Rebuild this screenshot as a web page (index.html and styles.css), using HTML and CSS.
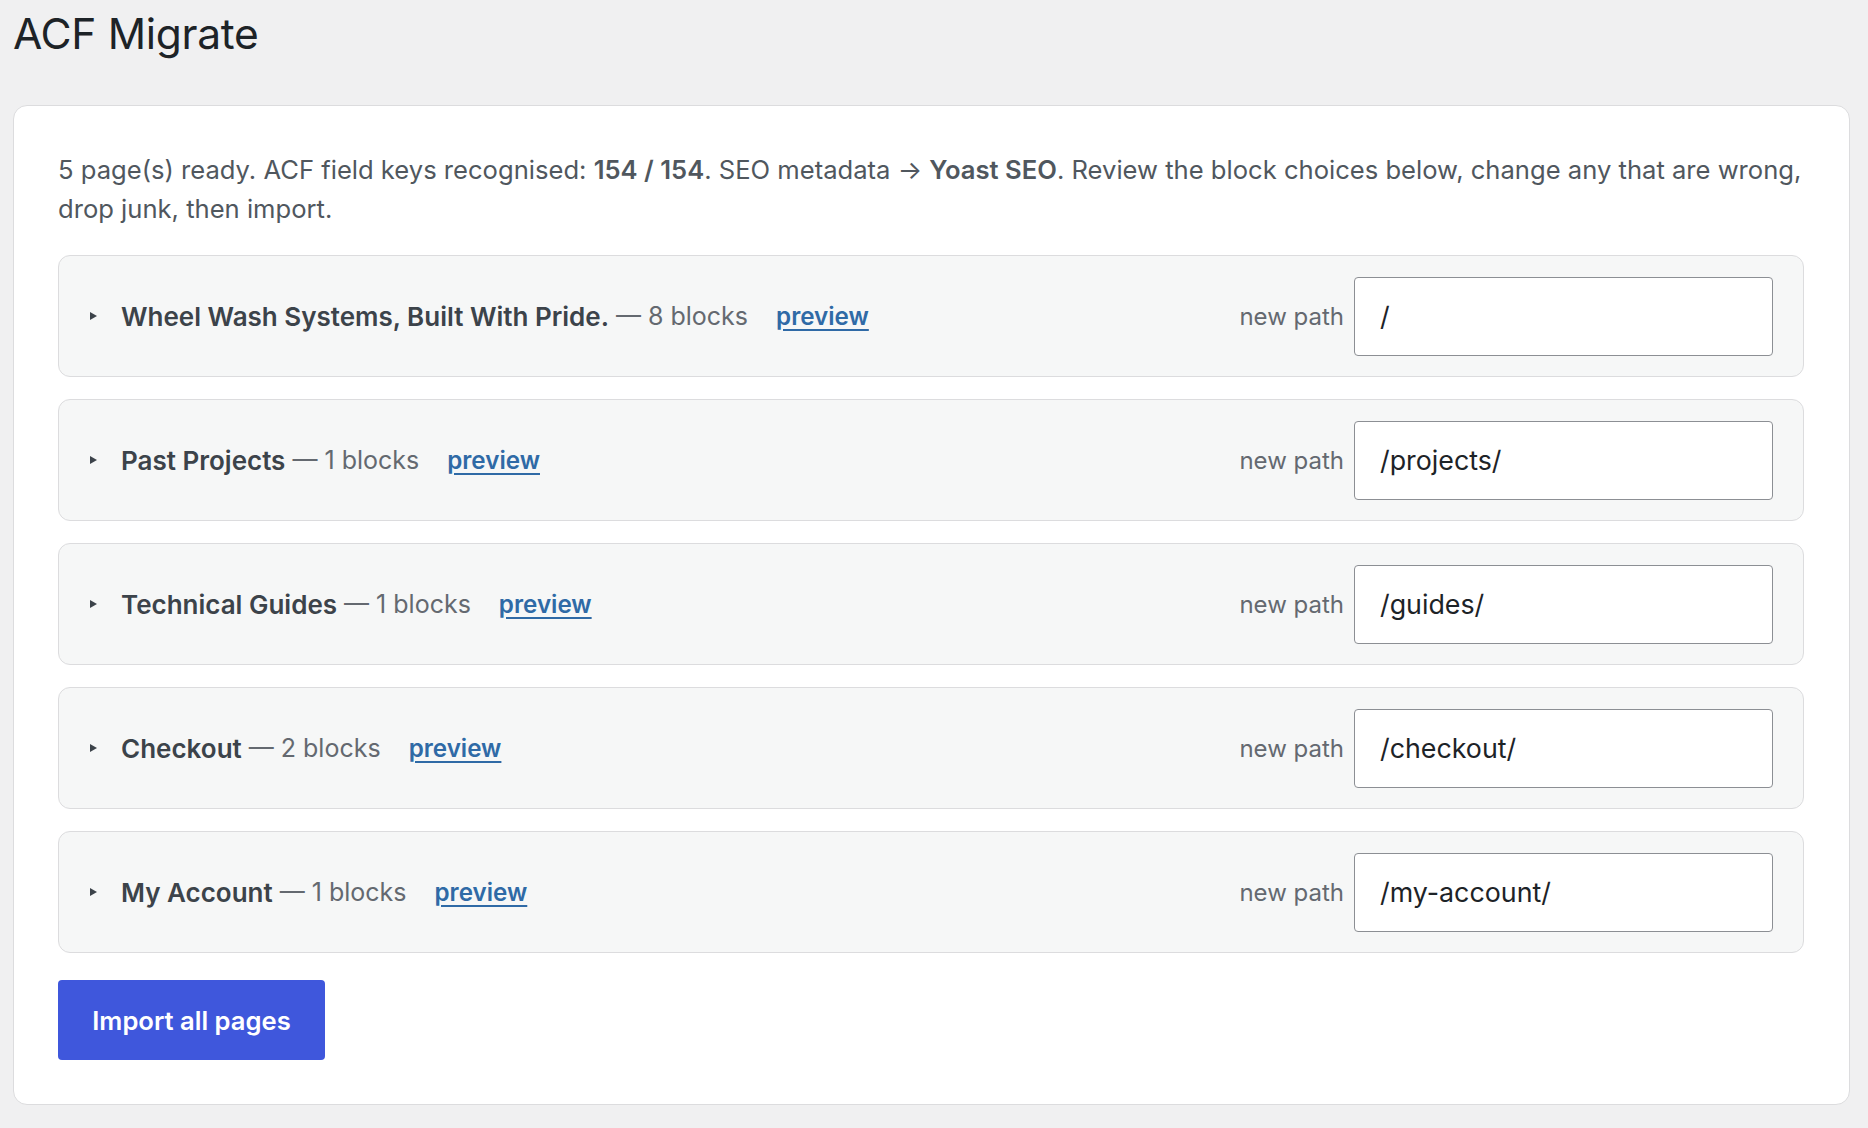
FILE: index.html
```html
<!DOCTYPE html>
<html lang="en">
<head>
<meta charset="utf-8">
<title>ACF Migrate</title>
<link rel="stylesheet" href="styles.css">
</head>
<body>
<div class="wrap">
  <h1 class="page-title">ACF Migrate</h1>
  <div class="card">
    <p class="summary-text">5 page(s) ready. ACF field keys recognised: <strong>154 / 154</strong>. SEO metadata → <strong>Yoast SEO</strong>. Review the block choices below, change any that are wrong, drop junk, then import.</p>
    <div class="pages">
      <div class="page-row">
        <div class="row-left">
          <svg class="caret" width="7" height="8" viewBox="0 0 7 8"><path d="M0 0 L7 4 L0 8 Z" fill="#3c434a"/></svg>
          <span class="page-name">Wheel Wash Systems, Built With Pride.</span>
          <span class="page-count">— 8 blocks</span>
          <a class="preview" href="#">preview</a>
        </div>
        <label class="row-right"><span class="path-label">new path</span><input class="path-input" type="text" value="/"></label>
      </div>
      <div class="page-row">
        <div class="row-left">
          <svg class="caret" width="7" height="8" viewBox="0 0 7 8"><path d="M0 0 L7 4 L0 8 Z" fill="#3c434a"/></svg>
          <span class="page-name">Past Projects</span>
          <span class="page-count">— 1 blocks</span>
          <a class="preview" href="#">preview</a>
        </div>
        <label class="row-right"><span class="path-label">new path</span><input class="path-input" type="text" value="/projects/"></label>
      </div>
      <div class="page-row">
        <div class="row-left">
          <svg class="caret" width="7" height="8" viewBox="0 0 7 8"><path d="M0 0 L7 4 L0 8 Z" fill="#3c434a"/></svg>
          <span class="page-name">Technical Guides</span>
          <span class="page-count">— 1 blocks</span>
          <a class="preview" href="#">preview</a>
        </div>
        <label class="row-right"><span class="path-label">new path</span><input class="path-input" type="text" value="/guides/"></label>
      </div>
      <div class="page-row">
        <div class="row-left">
          <svg class="caret" width="7" height="8" viewBox="0 0 7 8"><path d="M0 0 L7 4 L0 8 Z" fill="#3c434a"/></svg>
          <span class="page-name">Checkout</span>
          <span class="page-count">— 2 blocks</span>
          <a class="preview" href="#">preview</a>
        </div>
        <label class="row-right"><span class="path-label">new path</span><input class="path-input" type="text" value="/checkout/"></label>
      </div>
      <div class="page-row">
        <div class="row-left">
          <svg class="caret" width="7" height="8" viewBox="0 0 7 8"><path d="M0 0 L7 4 L0 8 Z" fill="#3c434a"/></svg>
          <span class="page-name">My Account</span>
          <span class="page-count">— 1 blocks</span>
          <a class="preview" href="#">preview</a>
        </div>
        <label class="row-right"><span class="path-label">new path</span><input class="path-input" type="text" value="/my-account/"></label>
      </div>
    </div>
    <button class="import-btn" type="button">Import all pages</button>
  </div>
</div>
</body>
</html>
```
FILE: styles.css
```css
* { box-sizing: border-box; }
html, body { margin: 0; padding: 0; }
body {
  background: #f0f0f1;
  font-family: Inter, "Noto Sans", "Liberation Sans", sans-serif;
  color: #1d2327;
}
.wrap {
  padding: 6px 18px 24px 13px;
}
.page-title {
  margin: 0 0 43px 0;
  font-size: 42.5px;
  line-height: 56px;
  font-weight: 400;
  color: #1d2327;
  letter-spacing: -0.3px;
}
.card {
  background: #fff;
  border: 1px solid #dcdcde;
  border-radius: 14px;
  padding: 44px 45px 44px 44px;
}
.summary-text {
  margin: 0 0 27px 0;
  font-size: 25.6px;
  line-height: 39px;
  color: #50575e;
}
.summary-text strong {
  font-weight: 600;
  color: #50575e;
}
.pages {
  display: flex;
  flex-direction: column;
  gap: 22px;
}
.page-row {
  display: flex;
  align-items: center;
  justify-content: space-between;
  height: 122px;
  padding: 0 30px 0 31px;
  background: #f6f7f7;
  border: 1px solid #dcdcde;
  border-radius: 12px;
}
.row-left {
  display: flex;
  align-items: center;
}
.caret {
  margin-right: 24px;
  flex: none;
}
.page-name {
  font-size: 26px;
  font-weight: 600;
  color: #3c434a;
}
.page-count {
  font-size: 25px;
  color: #646970;
  margin-left: 7px;
}
.preview {
  margin-left: 28px;
  font-size: 24.2px;
  font-weight: 600;
  color: #2f6aa6;
  text-decoration: underline;
  text-underline-offset: 4px;
  text-decoration-thickness: 2px;
}
.row-right {
  display: flex;
  align-items: center;
  gap: 10px;
}
.path-label {
  font-size: 24px;
  color: #646970;
}
.path-input {
  width: 419px;
  height: 79px;
  border: 1px solid #8c8f94;
  border-radius: 4px;
  background: #fff;
  padding: 0 20px 0 25px;
  font-family: Inter, "Noto Sans", "Liberation Sans", sans-serif;
  font-size: 26.8px;
  color: #1d2327;
  outline: none;
}
.import-btn {
  margin-top: 27px;
  width: 267px;
  height: 80px;
  background: #3f57dc;
  color: #fff;
  border: none;
  border-radius: 4px;
  font-family: Inter, "Noto Sans", "Liberation Sans", sans-serif;
  font-size: 25.6px;
  font-weight: 600;
  display: block;
  cursor: pointer;
}
```
